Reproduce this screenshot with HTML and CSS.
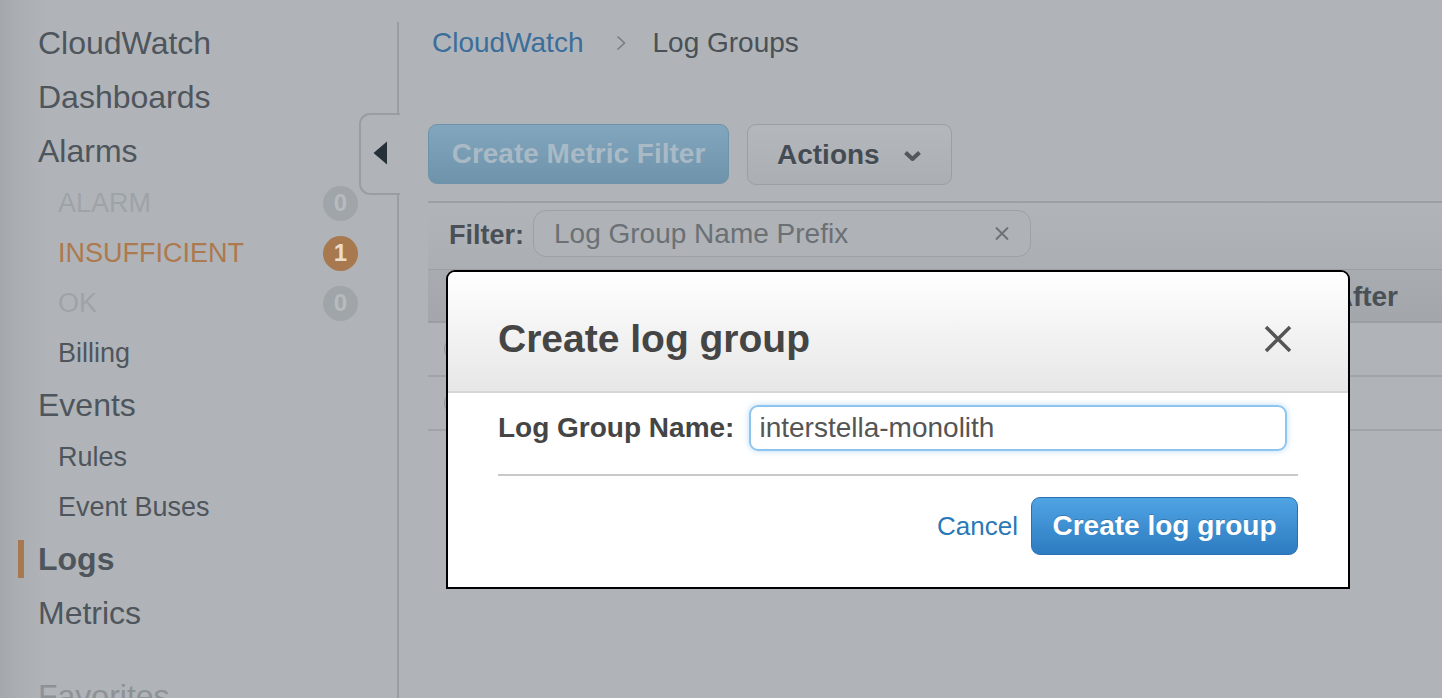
FILE: index.html
```html
<!DOCTYPE html>
<html>
<head>
<meta charset="utf-8">
<title>CloudWatch - Log Groups</title>
<link rel="stylesheet" href="styles.css">
</head>
<body>
<div class="page">
  <aside class="sidebar">
    <nav class="nav">
      <div class="item">CloudWatch</div>
      <div class="item">Dashboards</div>
      <div class="item">Alarms</div>
      <div class="sub state muted"><span>ALARM</span><span class="badge grey">0</span></div>
      <div class="sub state insufficient"><span>INSUFFICIENT</span><span class="badge orange">1</span></div>
      <div class="sub state muted"><span>OK</span><span class="badge grey">0</span></div>
      <div class="sub">Billing</div>
      <div class="item">Events</div>
      <div class="sub">Rules</div>
      <div class="sub">Event Buses</div>
      <div class="item active"><span class="marker"></span><span>Logs</span></div>
      <div class="item">Metrics</div>
      <div class="item favorites">Favorites</div>
    </nav>
    <div class="rail">
      <div class="collapse">
        <svg class="collapse-icon" width="14" height="24" viewBox="0 0 14 24"><path d="M14 0.5 L14 23.5 L0.5 12 Z" fill="#263039"/></svg>
      </div>
    </div>
  </aside>

  <main class="main">
    <div class="crumbs">
      <span class="crumb-link">CloudWatch</span>
      <svg class="crumb-sep" width="10" height="16" viewBox="0 0 10 16"><polyline points="1.5,1.5 8.5,8 1.5,14.5" fill="none" stroke="#787d82" stroke-width="1.6"/></svg>
      <span class="crumb-current">Log Groups</span>
    </div>

    <div class="toolbar">
      <div class="btn btn-disabled">Create Metric Filter</div>
      <div class="btn btn-actions"><span>Actions</span>
        <svg width="19" height="12" viewBox="0 0 19 12"><polyline points="2.5,2.5 9.5,9 16.5,2.5" fill="none" stroke="#51575d" stroke-width="4" stroke-linejoin="round"/></svg>
      </div>
    </div>

    <div class="filterbar">
      <span class="filter-label">Filter:</span>
      <div class="filter-input">
        <span class="filter-ph">Log Group Name Prefix</span>
        <svg width="14" height="13" viewBox="0 0 14 13"><path d="M1 0.5 L13 12.5 M13 0.5 L1 12.5" stroke="#6c7176" stroke-width="2"/></svg>
      </div>
    </div>

    <div class="thead"><span class="th-right">Expire Events After</span></div>
    <div class="trow"><span class="radio"></span></div>
    <div class="trow"><span class="radio"></span></div>
  </main>
</div>

<div class="modal">
  <div class="modal-header">
    <h2 class="modal-title">Create log group</h2>
    <svg class="modal-close" width="28" height="28" viewBox="0 0 28 28"><path d="M2 2 L26 26 M26 2 L2 26" stroke="#555" stroke-width="3.5"/></svg>
  </div>
  <div class="modal-body">
    <div class="field">
      <span class="field-label">Log Group Name:</span>
      <div class="field-input">interstella-monolith</div>
    </div>
    <div class="divider"></div>
    <div class="footer">
      <span class="cancel">Cancel</span>
      <div class="btn-create">Create log group</div>
    </div>
  </div>
</div>
</body>
</html>
```

FILE: styles.css
```css
* { box-sizing: border-box; }
html, body { margin: 0; padding: 0; }
body {
  width: 1442px;
  height: 698px;
  overflow: hidden;
  background: #b0b4b8;
  font-family: "Liberation Sans", Arial, sans-serif;
}
.page { display: flex; height: 698px; }

/* Sidebar */
.sidebar {
  display: flex;
  flex: none;
  width: 399px;
  background: linear-gradient(to right, #a4a8ac 0, #abafb3 20px, #b0b4b8 46px);
}
.nav { width: 397px; padding-top: 16px; color: #4f555c; }
.item { font-size: 32px; line-height: 54px; padding-left: 38px; white-space: nowrap; }
.item.active { display: flex; align-items: center; padding-left: 18px; font-weight: bold; }
.marker { width: 6px; height: 38px; background: #a8784e; margin-right: 14px; }
.item.favorites { margin-top: 29px; color: #8d9297; }
.sub { font-size: 27px; line-height: 50px; padding-left: 58px; white-space: nowrap; }
.state { display: flex; justify-content: space-between; align-items: center; padding-right: 39px; }
.state.muted { color: #9ea3a8; }
.state.insufficient { color: #ad794e; }
.badge {
  width: 35px; height: 35px; border-radius: 50%;
  display: flex; align-items: center; justify-content: center;
  font-size: 24px; font-weight: bold; line-height: 1;
}
.badge.grey { background: #a0a5a9; color: #b7bbbe; }
.badge.orange { background: #a8784e; color: #ecdccd; }

.rail { width: 2px; margin-top: 22px; background: #9a9ea2; position: relative; }
.collapse {
  position: absolute;
  top: 91px;
  right: -1px;
  width: 41px;
  height: 82px;
  background: #b0b4b8;
  border: 2px solid #9a9ea2;
  border-right: none;
  border-radius: 11px 0 0 11px;
  display: flex;
  align-items: center;
  padding-left: 12px;
}
.collapse-icon { display: block; margin-top: -3px; }

/* Main */
.main { flex: 1; min-width: 0; padding-left: 29px; }
.crumbs {
  display: flex; align-items: center;
  margin-top: 27px; height: 32px; padding-left: 4px;
  font-size: 28px; white-space: nowrap;
}
.crumb-link { color: #3b6e9b; }
.crumb-sep { margin: 0 26px 0 33px; }
.crumb-current { color: #495056; }

.toolbar { display: flex; gap: 18px; margin-top: 65px; align-items: flex-start; }
.btn {
  display: flex; align-items: center;
  font-size: 28px; font-weight: bold; white-space: nowrap;
  border-radius: 9px;
}
.btn-disabled {
  width: 301px; height: 60px; justify-content: center;
  background: linear-gradient(#81a6bd, #6e93ab);
  border: 1px solid #6d92aa;
  color: #a9bac6;
}
.btn-actions {
  width: 205px; height: 61px; padding-left: 29px; gap: 23px;
  background: linear-gradient(#b4b8bc, #abafb3);
  border: 1.5px solid #9b9fa3;
  color: #454b52;
  text-shadow: 0 1px 0 rgba(255,255,255,0.15);
}
.btn-actions svg { margin-top: 3px; }

.filterbar {
  display: flex; align-items: center;
  margin-top: 16px; height: 68px;
  border-top: 2px solid #9ca0a4;
  background: linear-gradient(#b1b5b9, #abafb3);
  padding-left: 21px; padding-bottom: 5px;
}
.filter-label { font-size: 27px; font-weight: bold; color: #4a5056; margin-top: 4px; }
.filter-input {
  margin-left: 9px;
  width: 498px; height: 47px;
  border: 1.5px solid #9da1a5;
  border-radius: 13px;
  background: #afb3b7;
  display: flex; align-items: center; justify-content: space-between;
  padding: 0 21px 0 20px;
}
.filter-ph { font-size: 28px; color: #6b7075; }

.thead {
  height: 54px;
  border-top: 1px solid #9a9ea2;
  border-bottom: 2px solid #9a9ea2;
  background: linear-gradient(#a8acb0, #a3a7ab);
  display: flex; align-items: center; justify-content: flex-end;
  padding-right: 44px;
}
.th-right { font-size: 28px; font-weight: bold; color: #4a5056; margin-top: 2px; }
.trow {
  height: 54px;
  border-bottom: 2px solid #a0a4a8;
  display: flex; align-items: center;
  padding-left: 16px;
}
.radio { width: 24px; height: 24px; border-radius: 50%; border: 1.5px solid #8f9397; }

/* Modal */
.modal {
  position: fixed;
  left: 446px; top: 270px;
  width: 904px; height: 319px;
  background: #fff;
  border: 2px solid #000;
  border-radius: 9px 9px 0 0;
  overflow: hidden;
}
.modal-header {
  height: 121px;
  padding: 14px 56px 0 50px;
  display: flex; align-items: center; justify-content: space-between;
  background: linear-gradient(#ffffff, #e7e7e7);
  border-bottom: 2px solid #d6d6d6;
}
.modal-title { margin: 0; font-size: 39px; font-weight: bold; color: #454545; }
.modal-close { display: block; }
.modal-body { padding: 12px 50px 0; }
.field { display: flex; align-items: center; }
.field-label { font-size: 28px; font-weight: bold; color: #454545; white-space: nowrap; }
.field-input {
  margin-left: 15px;
  width: 538px; height: 46px;
  border: 2px solid #8dc5ee;
  border-radius: 9px;
  box-shadow: 0 0 6px rgba(102,175,233,0.45);
  display: flex; align-items: center;
  padding-left: 8px;
  font-size: 28px; color: #555;
}
.divider { margin-top: 23px; border-top: 2px solid #c9c9c9; }
.footer { display: flex; justify-content: flex-end; align-items: center; gap: 13px; margin-top: 21px; }
.cancel { font-size: 26px; color: #2a79b7; }
.btn-create {
  width: 267px; height: 58px;
  display: flex; align-items: center; justify-content: center;
  font-size: 28px; font-weight: bold; color: #fff;
  background: linear-gradient(#4fa4e3, #2d7bc1);
  border: 1px solid #2b71b2;
  border-radius: 9px;
  text-shadow: 0 -1px 0 rgba(0,0,0,0.2);
}
```
